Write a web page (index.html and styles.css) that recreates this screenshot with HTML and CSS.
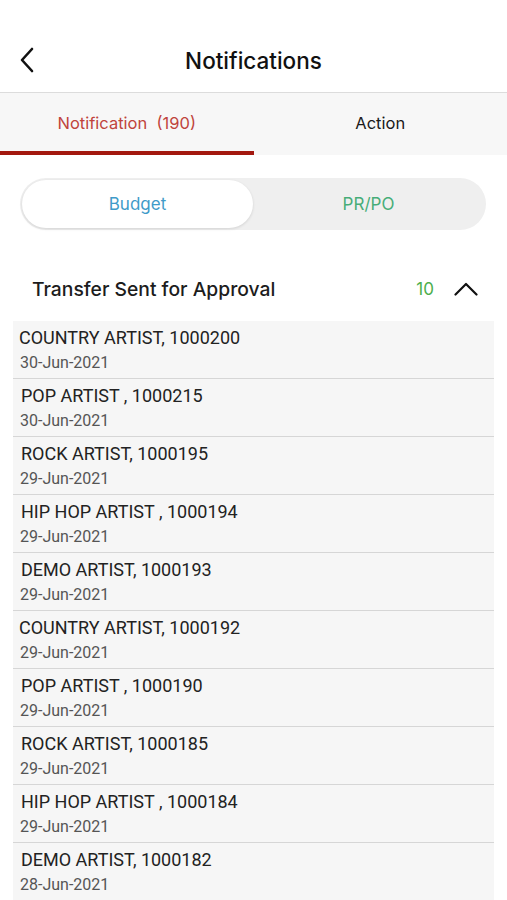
FILE: index.html
```html
<!DOCTYPE html>
<html lang="en">
<head>
    <meta charset="UTF-8">
    <meta name="viewport" content="width=device-width, initial-scale=1.0">
    <title>Notifications</title>
    <link rel="stylesheet" href="styles.css">
</head>
<body>
<header class="top-bar">
    <button class="back-btn" aria-label="Back">
        <svg width="16" height="26" viewBox="0 0 16 26"><path d="M13 2 L3 13 L13 24" fill="none" stroke="#111" stroke-width="2.6" stroke-linecap="round" stroke-linejoin="round"/></svg>
    </button>
    <h1>Notifications</h1>
</header>

<nav class="tabs">
    <div class="tab active">Notification&nbsp; (190)</div>
    <div class="tab">Action</div>
</nav>

<div class="segment">
    <div class="seg-item selected">Budget</div>
    <div class="seg-item pr">PR/PO</div>
</div>

<div class="section-head">
    <span class="section-title">Transfer Sent for Approval</span>
    <span class="count">10</span>
    <svg class="chevron" width="24" height="14" viewBox="0 0 24 14"><path d="M1.5 12.5 L12 2 L22.5 12.5" fill="none" stroke="#111" stroke-width="2.2" stroke-linecap="round" stroke-linejoin="round"/></svg>
</div>

<!-- list of transfers -->
<ul class="list">
    <li><div class="name first">COUNTRY ARTIST, 1000200</div><div class="date">30-Jun-2021</div></li>
    <li><div class="name">POP ARTIST , 1000215</div><div class="date">30-Jun-2021</div></li>
    <li><div class="name">ROCK ARTIST, 1000195</div><div class="date">29-Jun-2021</div></li>
    <li><div class="name">HIP HOP ARTIST , 1000194</div><div class="date">29-Jun-2021</div></li>
    <li><div class="name">DEMO ARTIST, 1000193</div><div class="date">29-Jun-2021</div></li>
    <li><div class="name first">COUNTRY ARTIST, 1000192</div><div class="date">29-Jun-2021</div></li>
    <li><div class="name">POP ARTIST , 1000190</div><div class="date">29-Jun-2021</div></li>
    <li><div class="name">ROCK ARTIST, 1000185</div><div class="date">29-Jun-2021</div></li>
    <li><div class="name">HIP HOP ARTIST , 1000184</div><div class="date">29-Jun-2021</div></li>
    <li><div class="name">DEMO ARTIST, 1000182</div><div class="date">28-Jun-2021</div></li>
</ul>
</body>
</html>
```

FILE: styles.css
```css
body {
    margin: 0;
    font-family: Inter, "Liberation Sans", sans-serif;
    background-color: #fff;
    color: #111;
}

.top-bar {
    position: relative;
    height: 93px;
    display: flex;
    align-items: flex-end;
    justify-content: center;
    border-bottom: 1px solid #dcdcdc;
    box-sizing: border-box;
    padding-bottom: 18px;
}

.top-bar h1 {
    margin: 0;
    font-size: 22.5px;
    font-weight: 500;
    line-height: 26px;
}

.back-btn {
    position: absolute;
    left: 19px;
    top: 47px;
    border: none;
    background: none;
    padding: 0;
}

.tabs {
    display: flex;
    height: 62px;
    background-color: #f7f7f7;
}

.tab {
    flex: 1;
    display: flex;
    align-items: center;
    justify-content: center;
    font-size: 16.5px;
    color: #1a1a1a;
    padding-bottom: 2px;
    box-sizing: border-box;
}

.tab.active {
    color: #c0443c;
    border-bottom: 4px solid #a3180f;
    padding-bottom: 0;
    padding-top: 2px;
}

.segment {
    display: flex;
    margin: 23px 21px 0 20px;
    height: 52px;
    padding: 2px;
    box-sizing: border-box;
    border-radius: 26px;
    background-color: #efefef;
}

.seg-item {
    flex: 1;
    display: flex;
    align-items: center;
    justify-content: center;
    font-size: 17px;
    border-radius: 24px;
}

.seg-item.selected {
    background-color: #fff;
    color: #3f9bc9;
    box-shadow: 0 1px 3px rgba(0, 0, 0, 0.12);
}

.seg-item.pr {
    color: #47ad78;
}

.section-head {
    display: flex;
    align-items: center;
    height: 91px;
    box-sizing: border-box;
    padding: 26px 29px 0 32px;
}

.section-title {
    flex: 1;
    font-size: 19.3px;
    font-weight: 500;
    color: #1c1c1c;
}

.count {
    font-size: 17px;
    color: #4cae4c;
    margin-right: 20px;
}

.list {
    list-style: none;
    margin: 0 13px 0 13px;
    padding: 0;
    background-color: #f6f6f6;
    font-family: Roboto, "Liberation Sans", sans-serif;
}

.list li {
    height: 58px;
    border-bottom: 1px solid #d6d6d6;
    box-sizing: border-box;
    padding: 6px 0 0 8px;
}

.name {
    font-size: 18px;
    line-height: 22px;
    color: #222;
}

.name.first {
    margin-left: -2px;
}

.date {
    font-size: 16px;
    line-height: 20px;
    margin-top: 4px;
    margin-left: -1px;
    color: #555;
}
```
